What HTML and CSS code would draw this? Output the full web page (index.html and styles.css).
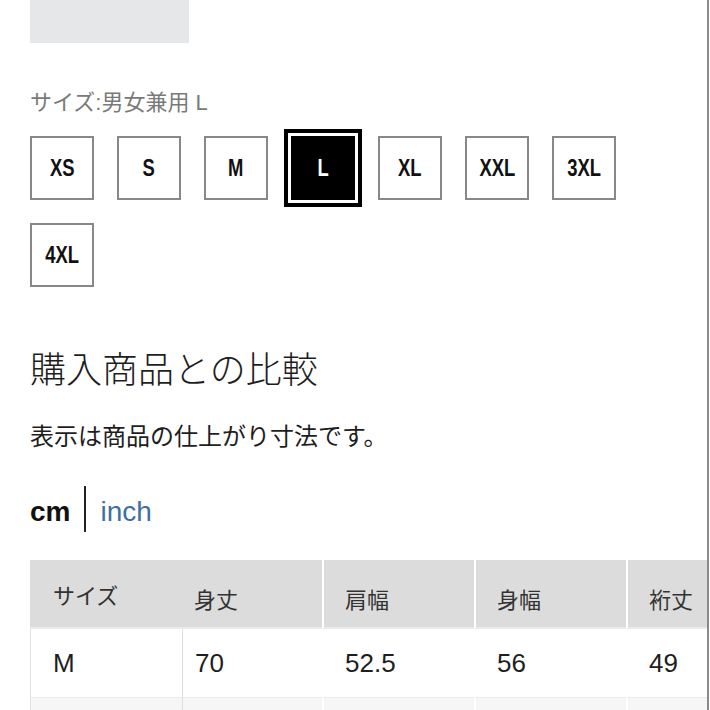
FILE: index.html
```html
<!DOCTYPE html>
<html lang="ja">
<head>
    <meta charset="UTF-8">
    <meta name="viewport" content="width=device-width, initial-scale=1.0">
    <title>サイズ比較</title>
    <link rel="stylesheet" href="styles.css">
</head>
<body>
    <div class="page">
        <div class="swatch"></div>

        <div class="size-label">サイズ:男女兼用 L</div>
        <div class="sizes">
            <div class="size"><span>XS</span></div>
            <div class="size"><span>S</span></div>
            <div class="size"><span>M</span></div>
            <div class="size active"><span>L</span></div>
            <div class="size"><span>XL</span></div>
            <div class="size"><span>XXL</span></div>
            <div class="size"><span>3XL</span></div>
            <div class="size"><span>4XL</span></div>
        </div>

        <h2 class="title">購入商品との比較</h2>
        <p class="note">表示は商品の仕上がり寸法です。</p>

        <div class="units">
            <span class="unit current">cm</span>
            <span class="unit-sep"></span>
            <span class="unit link">inch</span>
        </div>

        <div class="size-table">
            <div class="th first">サイズ</div>
            <div class="th second">身丈</div>
            <div class="th sep">肩幅</div>
            <div class="th sep">身幅</div>
            <div class="th sep">裄丈</div>

            <div class="td first">M</div>
            <div class="td second">70</div>
            <div class="td">52.5</div>
            <div class="td">56</div>
            <div class="td">49</div>

            <div class="td next first"></div>
            <div class="td next second"></div>
            <div class="td next line"></div>
            <div class="td next line"></div>
            <div class="td next line"></div>
        </div>
    </div>
</body>
</html>
```

FILE: styles.css
```css
html, body {
    margin: 0;
    height: 100%;
    background-color: #fff;
}

body {
    font-family: "Liberation Sans", "Noto Sans CJK JP", sans-serif;
    color: #222;
}

.page {
    box-sizing: border-box;
    width: 709px;
    height: 100%;
    padding-left: 30px;
    border-right: 2px solid #8a8a8a;
    overflow: hidden;
}

.swatch {
    width: 159px;
    height: 43px;
    background-color: #e6e7e9;
}

.size-label {
    margin-top: 48px;
    font-size: 22px;
    line-height: 24px;
    color: #7a7a7a;
}

.sizes {
    display: grid;
    grid-template-columns: repeat(7, 64px);
    gap: 23px;
    margin-top: 21px;
}

.size {
    box-sizing: border-box;
    width: 64px;
    height: 64px;
    border: 2px solid #888;
    display: flex;
    justify-content: center;
    align-items: center;
    font-weight: bold;
    font-size: 23px;
    color: #111;
}

/* no narrow face installed, so squeeze the regular bold */
.size span {
    display: inline-block;
    transform: scaleX(0.8);
}

.size.active {
    background-color: #000;
    border-color: #000;
    color: #fff;
    box-shadow: 0 0 0 3px #fff, 0 0 0 7px #000;
}

.title {
    margin: 62px 0 0;
    font-size: 36px;
    font-weight: 300;
    line-height: 43px;
    color: #1e1e1e;
}

.note {
    margin: 29px 0 0;
    font-size: 24px;
    line-height: 32px;
    color: #1e1e1e;
}

.units {
    display: flex;
    align-items: center;
    height: 46px;
    margin-top: 33px;
    font-size: 28px;
}

.unit {
    padding-top: 6px;
}

.unit.current {
    font-weight: bold;
    color: #111;
}

.unit-sep {
    width: 2px;
    height: 46px;
    margin: 0 14px;
    background-color: #222;
}

.unit.link {
    color: #3f6f9f;
}

.size-table {
    display: grid;
    grid-template-columns: 152px 140px 152px 152px 152px;
    margin-top: 28px;
}

.th {
    box-sizing: border-box;
    height: 69px;
    padding: 8px 0 0 23px;
    display: flex;
    align-items: center;
    background-color: #dcdcdc;
    border-bottom: 2px solid #ebebeb;
    font-size: 22px;
    color: #333;
}

.th.first {
    padding-top: 0;
}

.th.second {
    padding-left: 12px;
}

.th.sep {
    border-left: 2px solid #fff;
    padding-left: 21px;
}

.td {
    box-sizing: border-box;
    height: 68px;
    padding-left: 23px;
    display: flex;
    align-items: center;
    font-size: 26px;
    color: #1e1e1e;
}

.td.first {
    border-left: 1px solid #e2e2e2;
    padding-left: 22px;
}

.td.second {
    border-left: 1px solid #dedede;
    padding-left: 12px;
}

.td.next {
    background-color: #f6f6f6;
    border-top: 1px solid #ececec;
}

.td.next.line {
    border-left: 2px solid #fff;
}
```
